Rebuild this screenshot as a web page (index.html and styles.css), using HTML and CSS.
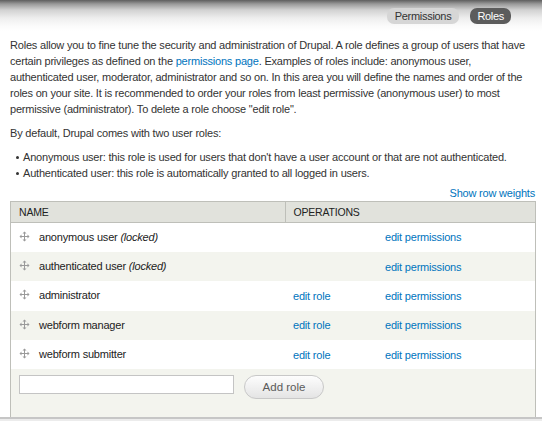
FILE: index.html
```html
<!DOCTYPE html>
<html>
<head>
<meta charset="utf-8">
<link rel="stylesheet" href="styles.css">
</head>
<body>
<div class="topbar">
  <ul class="tabs">
    <li><a class="tab" href="#">Permissions</a></li>
    <li><a class="tab active" href="#">Roles</a></li>
  </ul>
</div>
<div class="content">
  <p class="intro">Roles allow you to fine tune the security and administration of Drupal. A role defines a group of users that have certain privileges as defined on the <a href="#">permissions page</a>. Examples of roles include: anonymous user, authenticated user, moderator, administrator and so on. In this area you will define the names and order of the roles on your site. It is recommended to order your roles from least permissive (anonymous user) to most permissive (administrator). To delete a role choose "edit role".</p>
  <p class="lead">By default, Drupal comes with two user roles:</p>
  <ul class="bullets">
    <li>Anonymous user: this role is used for users that don't have a user account or that are not authenticated.</li>
    <li>Authenticated user: this role is automatically granted to all logged in users.</li>
  </ul>
  <div class="weights"><a href="#">Show row weights</a></div>
  <div class="box">
    <table class="roles">
      <thead>
        <tr><th class="c-name">NAME</th><th class="c-ops" colspan="2">OPERATIONS</th></tr>
      </thead>
      <tbody>
        <tr class="odd"><td class="c-name"><span class="handle"><svg width="11" height="11" viewBox="0 0 11 11"><path d="M5.5 0.5 L7.5 2.5 L6 2.5 L6 5 L8.5 5 L8.5 3.5 L10.5 5.5 L8.5 7.5 L8.5 6 L6 6 L6 8.5 L7.5 8.5 L5.5 10.5 L3.5 8.5 L5 8.5 L5 6 L2.5 6 L2.5 7.5 L0.5 5.5 L2.5 3.5 L2.5 5 L5 5 L5 2.5 L3.5 2.5 Z" fill="#9a9a9a"/></svg></span>anonymous user <em>(locked)</em></td><td class="c-role"></td><td class="c-perm"><a href="#">edit permissions</a></td></tr>
        <tr class="even"><td class="c-name"><span class="handle"><svg width="11" height="11" viewBox="0 0 11 11"><path d="M5.5 0.5 L7.5 2.5 L6 2.5 L6 5 L8.5 5 L8.5 3.5 L10.5 5.5 L8.5 7.5 L8.5 6 L6 6 L6 8.5 L7.5 8.5 L5.5 10.5 L3.5 8.5 L5 8.5 L5 6 L2.5 6 L2.5 7.5 L0.5 5.5 L2.5 3.5 L2.5 5 L5 5 L5 2.5 L3.5 2.5 Z" fill="#9a9a9a"/></svg></span>authenticated user <em>(locked)</em></td><td class="c-role"></td><td class="c-perm"><a href="#">edit permissions</a></td></tr>
        <tr class="odd"><td class="c-name"><span class="handle"><svg width="11" height="11" viewBox="0 0 11 11"><path d="M5.5 0.5 L7.5 2.5 L6 2.5 L6 5 L8.5 5 L8.5 3.5 L10.5 5.5 L8.5 7.5 L8.5 6 L6 6 L6 8.5 L7.5 8.5 L5.5 10.5 L3.5 8.5 L5 8.5 L5 6 L2.5 6 L2.5 7.5 L0.5 5.5 L2.5 3.5 L2.5 5 L5 5 L5 2.5 L3.5 2.5 Z" fill="#9a9a9a"/></svg></span>administrator</td><td class="c-role"><a href="#">edit role</a></td><td class="c-perm"><a href="#">edit permissions</a></td></tr>
        <tr class="even"><td class="c-name"><span class="handle"><svg width="11" height="11" viewBox="0 0 11 11"><path d="M5.5 0.5 L7.5 2.5 L6 2.5 L6 5 L8.5 5 L8.5 3.5 L10.5 5.5 L8.5 7.5 L8.5 6 L6 6 L6 8.5 L7.5 8.5 L5.5 10.5 L3.5 8.5 L5 8.5 L5 6 L2.5 6 L2.5 7.5 L0.5 5.5 L2.5 3.5 L2.5 5 L5 5 L5 2.5 L3.5 2.5 Z" fill="#9a9a9a"/></svg></span>webform manager</td><td class="c-role"><a href="#">edit role</a></td><td class="c-perm"><a href="#">edit permissions</a></td></tr>
        <tr class="odd"><td class="c-name"><span class="handle"><svg width="11" height="11" viewBox="0 0 11 11"><path d="M5.5 0.5 L7.5 2.5 L6 2.5 L6 5 L8.5 5 L8.5 3.5 L10.5 5.5 L8.5 7.5 L8.5 6 L6 6 L6 8.5 L7.5 8.5 L5.5 10.5 L3.5 8.5 L5 8.5 L5 6 L2.5 6 L2.5 7.5 L0.5 5.5 L2.5 3.5 L2.5 5 L5 5 L5 2.5 L3.5 2.5 Z" fill="#9a9a9a"/></svg></span>webform submitter</td><td class="c-role"><a href="#">edit role</a></td><td class="c-perm"><a href="#">edit permissions</a></td></tr>
      </tbody>
    </table>
    <div class="addrow">
      <input class="name-input" type="text">
      <button class="add-btn" type="button">Add role</button>
    </div>
  </div>
</div>
<div class="bottomedge"></div>
</body>
</html>
```

FILE: styles.css
```css
* { box-sizing: border-box; }
html, body { margin: 0; padding: 0; }
body {
  background: #fff;
  color: #333;
  font-family: "Liberation Sans", Arial, sans-serif;
  font-size: 11px;
  letter-spacing: -0.2px;
  line-height: 16px;
  width: 542px;
  height: 421px;
  overflow: hidden;
}
a { color: #0074bd; text-decoration: none; }

.topbar {
  height: 31px;
  background: linear-gradient(#5e5e5e 0px, #9a9a9a 4px, #d2d2d2 10px, #eeeeee 18px, #fbfbfb 26px, #ffffff 31px);
  display: flex;
  justify-content: flex-end;
  padding: 8px 31px 0 0;
}
.tabs { list-style: none; margin: 0; padding: 0; display: flex; gap: 11px; }
.tab {
  display: block;
  height: 16px;
  line-height: 16px;
  padding: 0 8px;
  border-radius: 7px;
  background: #d6d6d6;
  color: #333;
  font-size: 11px;
  letter-spacing: -0.3px;
}
.tab.active { background: #5c5c5c; color: #fff; padding: 0 7px; }

.content { padding: 6px 8px 0 10px; }
.intro { margin: 0 0 8px 0; }
.lead { margin: 0 0 8px 0; }
.bullets { margin: 0; padding: 0 0 0 13px; list-style: none; }
.bullets li { position: relative; }
.bullets li::before {
  content: "";
  position: absolute;
  left: -7px;
  top: 7px;
  width: 3px;
  height: 3px;
  border-radius: 50%;
  background: #333;
}
.weights { text-align: right; padding-top: 4px; height: 20px; margin-right: -1px; }

.box {
  width: 526px;
  border: 1px solid #bebfb9;
  border-top: none;
  border-bottom: none;
  background: #f3f4ee;
}
.roles { width: 100%; border-collapse: collapse; }
.roles th {
  background: #e1e2dc;
  border-top: 1px solid #bebfb9;
  border-bottom: 1px solid #bebfb9;
  height: 21px;
  text-align: left;
  font-weight: normal;
  color: #222;
  font-size: 10.5px;
  padding: 0 8px;
}
.roles th.c-ops { border-left: 1px solid #bebfb9; }
.roles td { height: 29.4px; padding: 0 8px; }
.roles tr.odd td { background: #fff; }
.roles tr.even td { background: #f3f4ee; }
.c-name { width: 274px; }
.roles td.c-name { padding-left: 8px; color: #222; }
.roles td.c-role { width: 92px; }
.handle { display: inline-block; width: 20px; vertical-align: -1px; }
em { font-style: italic; }

.addrow {
  height: 48px;
  display: flex;
  align-items: flex-start;
  padding: 6px 0 0 8px;
  gap: 10px;
}
.name-input {
  width: 215px;
  height: 19px;
  border: 1px solid #c4c4c4;
  background: #fff;
  margin: 0;
}
.add-btn {
  width: 80px;
  height: 24px;
  border: 1px solid #c8c8c8;
  border-radius: 12px;
  background: linear-gradient(#fdfdfd, #e4e4e4);
  color: #5a5a5a;
  font-family: "Liberation Sans", Arial, sans-serif;
  font-size: 11.5px;
  letter-spacing: 0;
  padding: 0;
  margin: 0;
}
.bottomedge {
  border-top: 2px solid #c6c6c6;
  background: #ececec;
  height: 10px;
}
```
